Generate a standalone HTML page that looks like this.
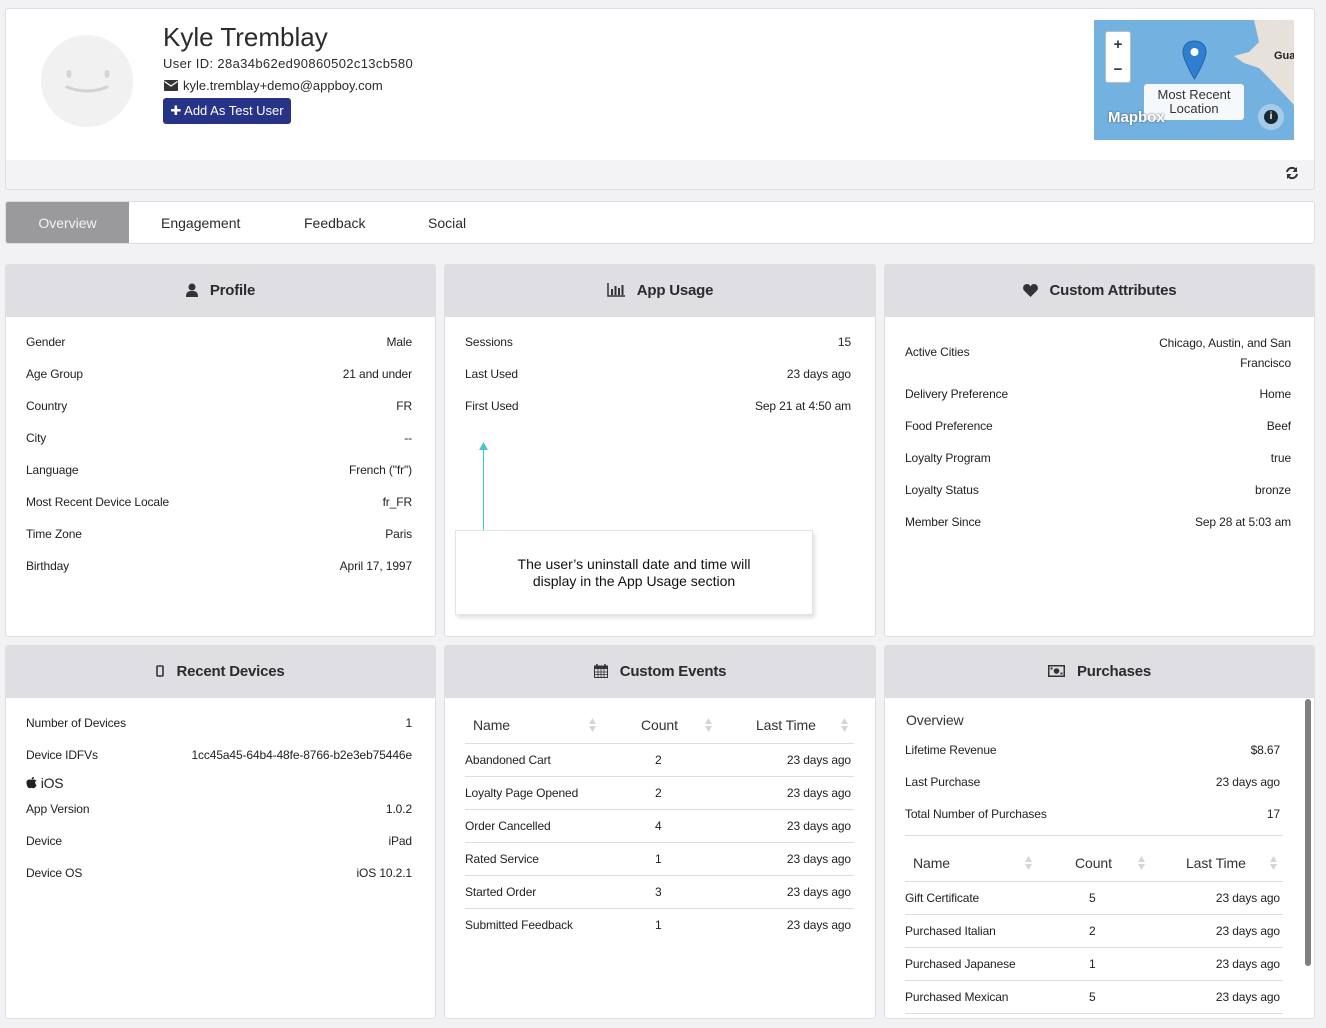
<!DOCTYPE html>
<html><head><meta charset="utf-8">
<style>
*{box-sizing:border-box;margin:0;padding:0}
body{width:1326px;height:1028px;background:#f2f2f4;font-family:"Liberation Sans",sans-serif;color:#2b2b2b;position:relative;overflow:hidden}
.a{position:absolute}
.card{position:absolute;background:#fff;border:1px solid #dedee2;border-radius:3px}
.ph{position:absolute;left:0;right:0;top:0;height:52px;background:#dfdfe3;display:flex;align-items:center;justify-content:center;font-weight:bold;font-size:15px;color:#2b2b2b;letter-spacing:-0.2px;padding-bottom:2px}
.ph svg{margin-right:12px}
.t{position:absolute;font-size:12px;line-height:16px;letter-spacing:-0.12px;color:#222;white-space:nowrap;margin-top:1px}
.v{position:absolute;font-size:12px;line-height:16px;letter-spacing:-0.12px;color:#222;white-space:nowrap;text-align:right;margin-top:1px}
.hr{position:absolute;height:1px;background:#ddd}
.th{position:absolute;font-size:14px;line-height:18px;color:#333;letter-spacing:-0.1px}
.sa{position:absolute;width:7px;height:14px}
</style></head><body>

<div class="card" style="left:5px;top:8px;width:1310px;height:182px;overflow:hidden">
  <div class="a" style="left:0;right:0;top:151px;bottom:0;background:#f3f3f5"></div>
</div>
<svg class="a" style="left:41px;top:35px" width="92" height="92" viewBox="0 0 92 92">
<circle cx="46" cy="46" r="46" fill="#f1f1f1"/>
<ellipse cx="28" cy="39" rx="2.5" ry="4" fill="#d6d6d6"/><ellipse cx="66" cy="39" rx="2.5" ry="4" fill="#d6d6d6"/>
<path d="M26 52 Q46 60 66 52" stroke="#d2d2d2" stroke-width="3" fill="none" stroke-linecap="round"/>
</svg>
<div class="a" style="left:163px;top:22px;font-size:26px;line-height:30px;color:#2b2b2b;letter-spacing:0px">Kyle Tremblay</div>
<div class="a" style="left:163px;top:56px;font-size:13px;line-height:16px;color:#2b2b2b;letter-spacing:0.35px">User ID: 28a34b62ed90860502c13cb580</div>
<svg class="a" style="left:164px;top:80px" width="14" height="11" viewBox="0 0 14 11"><rect x="0" y="0" width="14" height="11" rx="1" fill="#333"/><path d="M0.5 1.5 L7 6 L13.5 1.5" stroke="#fff" stroke-width="1.3" fill="none"/></svg>
<div class="a" style="left:183px;top:78px;font-size:13px;line-height:16px;color:#2b2b2b">kyle.tremblay+demo@appboy.com</div>
<div class="a" style="left:163px;top:98px;width:128px;height:26px;background:#263387;border-radius:3px;color:#fff;font-size:13px;line-height:26px;text-align:center">✚ Add As Test User</div>

<div class="a" style="left:1094px;top:20px;width:200px;height:120px;background:#73b2e0;overflow:hidden">
  <svg class="a" style="left:0;top:0" width="200" height="120" viewBox="0 0 200 120">
    <path d="M160 0 L200 0 L200 85 L188 72 L175 58 L165 48 L150 43 L140 36 L155 32 L165 22 Z" fill="#e7e1db"/>
  </svg>
  <div class="a" style="left:180px;top:30px;font-size:11px;font-weight:bold;color:#222">Gua</div>
  <div class="a" style="left:11px;top:11px;width:26px;height:52px;background:#fff;border:1px solid #bbb;border-radius:3px;font-size:15px;font-weight:bold;text-align:center;line-height:25px;color:#333">+<br>−</div>
  <svg class="a" style="left:88px;top:20px" width="25" height="40" viewBox="0 0 25 40"><path d="M12.5 1 C5 1 1 6 1 12 C1 20 12.5 39 12.5 39 C12.5 39 24 20 24 12 C24 6 20 1 12.5 1Z" fill="#2e7fcf" stroke="#1f64a8"/><circle cx="12.5" cy="12" r="4" fill="#fff"/></svg>
  <div class="a" style="left:50px;top:64px;width:100px;height:36px;background:#f6f9fb;border-radius:3px;font-size:13px;line-height:14px;text-align:center;padding-top:4px;color:#333">Most Recent<br>Location</div>
  <div class="a" style="left:14px;top:89px;font-size:15px;font-weight:bold;color:#fff;text-shadow:0 0 2px #456">Mapbox</div>
  <div class="a" style="left:164px;top:84px;width:26px;height:26px;border-radius:13px;background:#a6cbe8"></div>
  <div class="a" style="left:170px;top:90px;width:14px;height:14px;border-radius:7px;background:#1b2833;color:#fff;font-size:10px;font-weight:bold;text-align:center;line-height:14px">i</div>
</div>
<svg class="a" style="left:1285px;top:166px" width="14" height="14" viewBox="0 0 14 14"><path d="M2 6 A5 5 0 0 1 11 4" stroke="#333" stroke-width="2" fill="none"/><path d="M12 1 L12 6 L7.5 6 Z" fill="#333"/><path d="M12 8 A5 5 0 0 1 3 10" stroke="#333" stroke-width="2" fill="none"/><path d="M2 13 L2 8 L6.5 8 Z" fill="#333"/></svg>

<div class="card" style="left:5px;top:201px;width:1310px;height:43px;overflow:hidden">
  <div class="a" style="left:0;top:0;width:123px;height:43px;background:#9a9a9c;color:#f2f2f2;font-size:14px;line-height:42px;text-align:center">Overview</div>
  <div class="a" style="left:155px;top:0;font-size:14px;line-height:42px;color:#2b2b2b">Engagement</div>
  <div class="a" style="left:298px;top:0;font-size:14px;line-height:42px;color:#2b2b2b">Feedback</div>
  <div class="a" style="left:422px;top:0;font-size:14px;line-height:42px;color:#2b2b2b">Social</div>
</div>

<div class="card" style="left:5px;top:264px;width:431px;height:373px;overflow:hidden"><div class="ph">
<svg width="12" height="14" viewBox="0 0 12 14"><circle cx="6" cy="4" r="3.5" fill="#333"/><path d="M0 14 C0 9 2 8 6 8 C10 8 12 9 12 14Z" fill="#333"/></svg>Profile</div></div>
<div class="t" style="left:26px;top:333px">Gender</div><div class="v" style="right:914px;top:333px">Male</div>
<div class="t" style="left:26px;top:365px">Age Group</div><div class="v" style="right:914px;top:365px">21 and under</div>
<div class="t" style="left:26px;top:397px">Country</div><div class="v" style="right:914px;top:397px">FR</div>
<div class="t" style="left:26px;top:429px">City</div><div class="v" style="right:914px;top:429px">--</div>
<div class="t" style="left:26px;top:461px">Language</div><div class="v" style="right:914px;top:461px">French ("fr")</div>
<div class="t" style="left:26px;top:493px">Most Recent Device Locale</div><div class="v" style="right:914px;top:493px">fr_FR</div>
<div class="t" style="left:26px;top:525px">Time Zone</div><div class="v" style="right:914px;top:525px">Paris</div>
<div class="t" style="left:26px;top:557px">Birthday</div><div class="v" style="right:914px;top:557px">April 17, 1997</div>

<div class="card" style="left:444px;top:264px;width:432px;height:373px;overflow:hidden"><div class="ph">
<svg width="18" height="14" viewBox="0 0 18 14"><path d="M1 0 V13 H18" stroke="#333" stroke-width="1.5" fill="none"/><rect x="4" y="6" width="2" height="6" fill="#333"/><rect x="7.5" y="3" width="2" height="9" fill="#333"/><rect x="11" y="5" width="2" height="7" fill="#333"/><rect x="14.5" y="2" width="2" height="10" fill="#333"/></svg>App Usage</div></div>
<div class="t" style="left:465px;top:333px">Sessions</div><div class="v" style="right:475px;top:333px">15</div>
<div class="t" style="left:465px;top:365px">Last Used</div><div class="v" style="right:475px;top:365px">23 days ago</div>
<div class="t" style="left:465px;top:397px">First Used</div><div class="v" style="right:475px;top:397px">Sep 21 at 4:50 am</div>
<div class="a" style="left:483px;top:448px;width:1px;height:82px;background:#4ac3d6"></div>
<svg class="a" style="left:479px;top:442px" width="9" height="8" viewBox="0 0 9 8"><path d="M4.5 0 L9 8 L0 8Z" fill="#4ac3d6"/></svg>
<div class="a" style="left:455px;top:530px;width:358px;height:85px;background:#fff;border:1px solid #e4e4e4;box-shadow:2px 3px 4px rgba(0,0,0,0.12);font-size:14px;line-height:17px;text-align:center;padding-top:25px;color:#111">The user’s uninstall date and time will<br>display in the App Usage section</div>

<div class="card" style="left:884px;top:264px;width:431px;height:373px;overflow:hidden"><div class="ph">
<svg width="15" height="13" viewBox="0 0 15 13"><path d="M7.5 13 L1 6.5 C-1 4 0.5 0 4 0 C6 0 7 1.5 7.5 2.5 C8 1.5 9 0 11 0 C14.5 0 16 4 14 6.5Z" fill="#333"/></svg>Custom Attributes</div></div>
<div class="t" style="left:905px;top:343px">Active Cities</div>
<div class="v" style="right:35px;top:332px;line-height:20px">Chicago, Austin, and San<br>Francisco</div>
<div class="t" style="left:905px;top:385px">Delivery Preference</div><div class="v" style="right:35px;top:385px">Home</div>
<div class="t" style="left:905px;top:417px">Food Preference</div><div class="v" style="right:35px;top:417px">Beef</div>
<div class="t" style="left:905px;top:449px">Loyalty Program</div><div class="v" style="right:35px;top:449px">true</div>
<div class="t" style="left:905px;top:481px">Loyalty Status</div><div class="v" style="right:35px;top:481px">bronze</div>
<div class="t" style="left:905px;top:513px">Member Since</div><div class="v" style="right:35px;top:513px">Sep 28 at 5:03 am</div>

<div class="card" style="left:5px;top:645px;width:431px;height:374px;overflow:hidden"><div class="ph">
<svg width="8" height="12" viewBox="0 0 8 12"><rect x="1" y="1" width="6" height="10" rx="1" stroke="#333" stroke-width="1.6" fill="none"/></svg>Recent Devices</div></div>
<div class="t" style="left:26px;top:714px">Number of Devices</div><div class="v" style="right:914px;top:714px">1</div>
<div class="t" style="left:26px;top:746px">Device IDFVs</div><div class="v" style="right:914px;top:746px">1cc45a45-64b4-48fe-8766-b2e3eb75446e</div>
<div class="t" style="left:26px;top:773px;font-size:14px;line-height:18px;letter-spacing:-0.2px"><svg width="11" height="12" viewBox="0 0 11 12" style="vertical-align:-1px"><path d="M5.5 3 C4 2 0 2 0.5 6.5 C1 10 3 12 4.5 11 C5 10.8 6 10.8 6.5 11 C8 12 10 10 10.5 8 C9 7 8.5 4.5 10.5 3.8 C9 2 7 2.3 5.5 3Z M5.5 2.5 C5.5 1 6.5 0 8 0 C8 1.5 7 2.5 5.5 2.5Z" fill="#222"/></svg> iOS</div>
<div class="t" style="left:26px;top:800px">App Version</div><div class="v" style="right:914px;top:800px">1.0.2</div>
<div class="t" style="left:26px;top:832px">Device</div><div class="v" style="right:914px;top:832px">iPad</div>
<div class="t" style="left:26px;top:864px">Device OS</div><div class="v" style="right:914px;top:864px">iOS 10.2.1</div>

<div class="card" style="left:444px;top:645px;width:432px;height:374px;overflow:hidden"><div class="ph">
<svg width="14" height="14" viewBox="0 0 14 14"><rect x="0.5" y="2" width="13" height="11.5" fill="none" stroke="#333"/><rect x="0.5" y="2" width="13" height="3" fill="#333"/><path d="M3 0 V3 M11 0 V3" stroke="#333" stroke-width="1.5"/><path d="M0.5 8 H13.5 M0.5 10.5 H13.5 M4 5 V13.5 M7 5 V13.5 M10 5 V13.5" stroke="#333" stroke-width="0.8"/></svg>Custom Events</div></div>
<div class="th" style="left:473px;top:716px">Name</div>
<div class="th" style="left:641px;top:716px">Count</div>
<div class="th" style="left:756px;top:716px">Last Time</div>
<svg class="sa" style="left:589px;top:718px" viewBox="0 0 7 14"><path d="M3.5 0 L7 6 H0Z M3.5 14 L7 8 H0Z" fill="#d5d5d5"/></svg>
<svg class="sa" style="left:705px;top:718px" viewBox="0 0 7 14"><path d="M3.5 0 L7 6 H0Z M3.5 14 L7 8 H0Z" fill="#d5d5d5"/></svg>
<svg class="sa" style="left:841px;top:718px" viewBox="0 0 7 14"><path d="M3.5 0 L7 6 H0Z M3.5 14 L7 8 H0Z" fill="#d5d5d5"/></svg>
<div class="hr" style="left:465px;width:389px;top:743px"></div>
<div class="t" style="left:465px;top:751px">Abandoned Cart</div><div class="t" style="left:655px;top:751px">2</div><div class="v" style="right:475px;top:751px">23 days ago</div>
<div class="hr" style="left:465px;width:389px;top:776px"></div>
<div class="t" style="left:465px;top:784px">Loyalty Page Opened</div><div class="t" style="left:655px;top:784px">2</div><div class="v" style="right:475px;top:784px">23 days ago</div>
<div class="hr" style="left:465px;width:389px;top:809px"></div>
<div class="t" style="left:465px;top:817px">Order Cancelled</div><div class="t" style="left:655px;top:817px">4</div><div class="v" style="right:475px;top:817px">23 days ago</div>
<div class="hr" style="left:465px;width:389px;top:842px"></div>
<div class="t" style="left:465px;top:850px">Rated Service</div><div class="t" style="left:655px;top:850px">1</div><div class="v" style="right:475px;top:850px">23 days ago</div>
<div class="hr" style="left:465px;width:389px;top:875px"></div>
<div class="t" style="left:465px;top:883px">Started Order</div><div class="t" style="left:655px;top:883px">3</div><div class="v" style="right:475px;top:883px">23 days ago</div>
<div class="hr" style="left:465px;width:389px;top:908px"></div>
<div class="t" style="left:465px;top:916px">Submitted Feedback</div><div class="t" style="left:655px;top:916px">1</div><div class="v" style="right:475px;top:916px">23 days ago</div>

<div class="card" style="left:884px;top:645px;width:431px;height:374px;overflow:hidden"><div class="ph">
<svg width="17" height="12" viewBox="0 0 17 12"><rect x="0.75" y="0.75" width="15.5" height="10.5" fill="none" stroke="#333" stroke-width="1.5"/><circle cx="8.5" cy="6" r="2.8" fill="#333"/><rect x="2.5" y="2.5" width="2" height="2" fill="#333"/><rect x="12.5" y="7.5" width="2" height="2" fill="#333"/></svg>Purchases</div></div>
<div class="th" style="left:906px;top:711px">Overview</div>
<div class="t" style="left:905px;top:741px">Lifetime Revenue</div><div class="v" style="right:46px;top:741px">$8.67</div>
<div class="t" style="left:905px;top:773px">Last Purchase</div><div class="v" style="right:46px;top:773px">23 days ago</div>
<div class="t" style="left:905px;top:805px">Total Number of Purchases</div><div class="v" style="right:46px;top:805px">17</div>
<div class="hr" style="left:905px;width:378px;top:835px"></div>
<div class="th" style="left:913px;top:854px">Name</div>
<div class="th" style="left:1075px;top:854px">Count</div>
<div class="th" style="left:1186px;top:854px">Last Time</div>
<svg class="sa" style="left:1025px;top:856px" viewBox="0 0 7 14"><path d="M3.5 0 L7 6 H0Z M3.5 14 L7 8 H0Z" fill="#d5d5d5"/></svg>
<svg class="sa" style="left:1138px;top:856px" viewBox="0 0 7 14"><path d="M3.5 0 L7 6 H0Z M3.5 14 L7 8 H0Z" fill="#d5d5d5"/></svg>
<svg class="sa" style="left:1270px;top:856px" viewBox="0 0 7 14"><path d="M3.5 0 L7 6 H0Z M3.5 14 L7 8 H0Z" fill="#d5d5d5"/></svg>
<div class="hr" style="left:905px;width:378px;top:881px"></div>
<div class="t" style="left:905px;top:889px">Gift Certificate</div><div class="t" style="left:1089px;top:889px">5</div><div class="v" style="right:46px;top:889px">23 days ago</div>
<div class="hr" style="left:905px;width:378px;top:914px"></div>
<div class="t" style="left:905px;top:922px">Purchased Italian</div><div class="t" style="left:1089px;top:922px">2</div><div class="v" style="right:46px;top:922px">23 days ago</div>
<div class="hr" style="left:905px;width:378px;top:947px"></div>
<div class="t" style="left:905px;top:955px">Purchased Japanese</div><div class="t" style="left:1089px;top:955px">1</div><div class="v" style="right:46px;top:955px">23 days ago</div>
<div class="hr" style="left:905px;width:378px;top:980px"></div>
<div class="t" style="left:905px;top:988px">Purchased Mexican</div><div class="t" style="left:1089px;top:988px">5</div><div class="v" style="right:46px;top:988px">23 days ago</div>
<div class="hr" style="left:905px;width:378px;top:1013px"></div>
<div class="a" style="left:1305px;top:699px;width:6px;height:267px;background:#7f7f7f;border-radius:3px"></div>

</body></html>
